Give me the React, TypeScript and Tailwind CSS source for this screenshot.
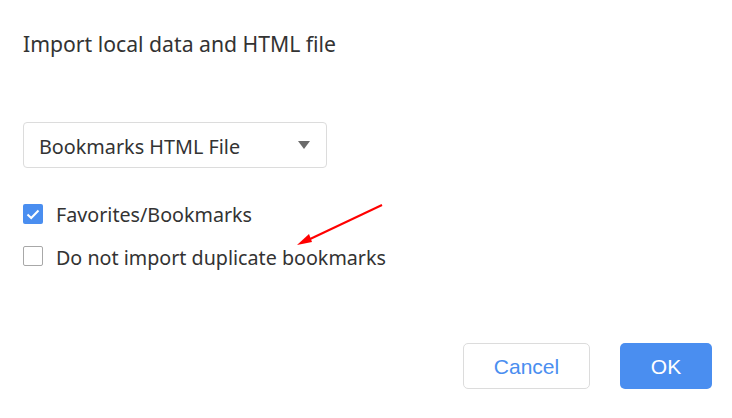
import React from "react";

export default function App() {
  return (
    <div
      className="relative w-[732px] h-[418px] bg-white text-[#333333] flex flex-col"
      style={{ fontFamily: '"Noto Sans", "Open Sans", sans-serif' }}
    >
      <div className="pl-[23px] pt-[31px] text-[21.2px] leading-[26px]">Import local data and HTML file</div>

      <div className="pl-[23px] mt-[65px]">
        <div className="w-[304px] h-[46px] rounded-[4px] border border-[#dcdcdc] flex items-center justify-between pl-[15px] pr-[16px]">
          <span className="text-[19.8px] leading-[26px] translate-y-[2px]">Bookmarks HTML File</span>
          <svg width="12" height="9" viewBox="0 0 12 9">
            <path d="M0 0 L12 0 L6 8 Z" fill="#6b6b6b" />
          </svg>
        </div>
      </div>

      <div className="pl-[23px] mt-[36px] flex flex-col gap-[22px]">
        <label className="flex items-center gap-[13px] h-[20px]">
          <span className="w-[20px] h-[20px] rounded-[2px] bg-[#4a8ef0] flex items-center justify-center">
            <svg width="14" height="11" viewBox="0 0 14 11">
              <path d="M1.5 5.5 L5.2 9 L12.5 1.5" stroke="white" strokeWidth="2" fill="none" />
            </svg>
          </span>
          <span className="text-[19.7px] leading-[20px] translate-y-[1px]">Favorites/Bookmarks</span>
        </label>
        <label className="flex items-center gap-[13px] h-[20px]">
          <span className="w-[20px] h-[20px] rounded-[2px] border border-[#a8a8a8] bg-white" />
          <span className="text-[19.7px] leading-[20px] translate-y-[1.5px]">Do not import duplicate bookmarks</span>
        </label>
      </div>

      <div className="mt-auto mb-[29px] pr-[20px] flex justify-end gap-[30px]" style={{ fontFamily: '"Liberation Sans", Arial, sans-serif' }}>
        <button className="w-[127px] h-[46px] rounded-[5px] border border-[#dcdcdc] bg-white text-[#4a8ef0] text-[21px] pt-[2px]">Cancel</button>
        <button className="w-[92px] h-[46px] rounded-[5px] bg-[#4a8ef0] text-white text-[21px] pt-[2px]">OK</button>
      </div>

      <svg className="absolute left-0 top-0 pointer-events-none" width="732" height="418">
        <line x1="382" y1="205" x2="308" y2="240" stroke="#ff0000" strokeWidth="2" />
        <path d="M297 245 L309 234 L312 242 Z" fill="#ff0000" />
      </svg>
    </div>
  );
}
